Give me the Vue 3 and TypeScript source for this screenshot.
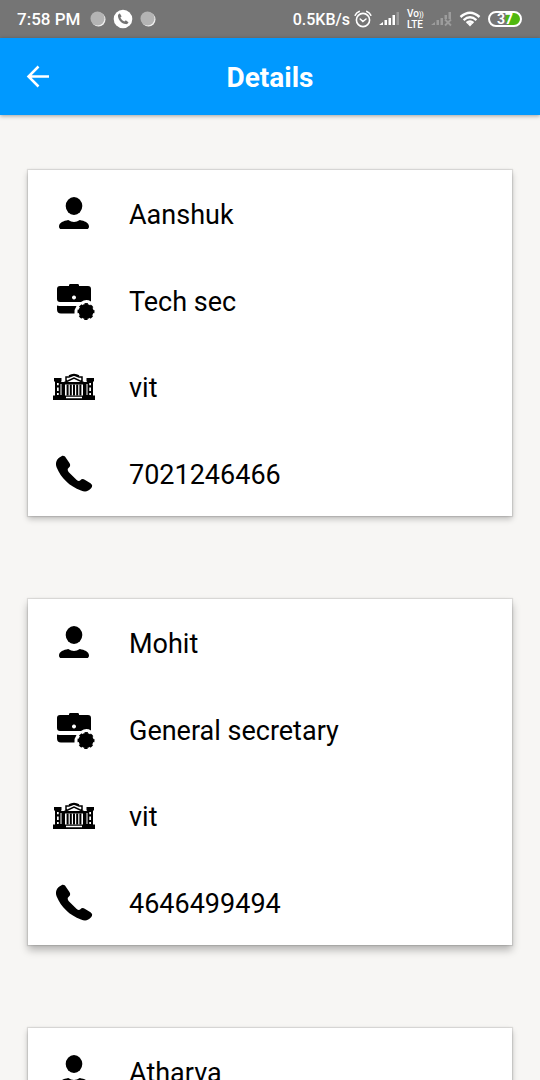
<script setup lang="ts">
interface Contact {
  name: string
  role: string
  college: string
  phone: string
}

const contacts: Contact[] = [
  { name: 'Aanshuk', role: 'Tech sec', college: 'vit', phone: '7021246466' },
  { name: 'Mohit', role: 'General secretary', college: 'vit', phone: '4646499494' },
  { name: 'Atharva', role: '', college: '', phone: '' },
]
</script>

<template>
  <div class="screen">
    <div class="status">
      <div class="status-left">
        <span class="clock">7:58 PM</span>
        <svg class="dot" viewBox="0 0 16 16" aria-hidden="true">
          <circle cx="8.5" cy="8.5" r="7" fill="#f0f0f0" />
          <circle cx="7.5" cy="7.5" r="7" fill="#b4b4b4" />
        </svg>
        <svg class="call" viewBox="0 0 20 20" aria-hidden="true">
          <circle cx="10" cy="10" r="9.3" fill="#fff" />
          <path d="M6.3 4.7c-1 .6-1.5 1.5-1.3 2.7.7 4 3.5 6.9 7.6 7.7 1.2.2 2.2-.3 2.7-1.3.2-.4.1-.7-.2-.9l-2-1.3c-.3-.2-.7-.2-.9.1l-.8.9C9.5 11.7 8.3 10.5 7.4 8.6l.9-.8c.3-.3.3-.6.1-.9L7.2 4.9c-.2-.3-.5-.4-.9-.2z" fill="#757575" />
        </svg>
        <svg class="dot" viewBox="0 0 16 16" aria-hidden="true">
          <circle cx="8.5" cy="8.5" r="7" fill="#f0f0f0" />
          <circle cx="7.5" cy="7.5" r="7" fill="#b4b4b4" />
        </svg>
      </div>
      <div class="status-right">
        <div class="network">
          <span class="speed">0.5KB/s</span>
          <svg class="alarm" viewBox="0 0 18 18" fill="none" stroke="#fff" stroke-width="1.6" stroke-linecap="round" aria-hidden="true">
            <circle cx="9" cy="10" r="6.6" />
            <path d="M6.2 9l2.7 2.5L12 9M1.2 5.2Q2.3 2.5 5.2 1.4M16.8 5.2Q15.7 2.5 12.8 1.4" />
          </svg>
        </div>
        <svg class="signal" viewBox="0 0 21 16" aria-hidden="true">
          <path d="M0 14l4-3v3zM5.5 9H8v5H5.5zM9.5 7H12v7H9.5zM13.5 4H16v10h-2.5z" fill="#fff" />
          <path d="M17.5 1H20v13h-2.5z" fill="#999" />
        </svg>
        <span class="volte"><span>Vo<small>))</small></span><span>LTE</span></span>
        <svg class="signal" viewBox="0 0 21 16" aria-hidden="true">
          <path d="M0 14l4-3v3zM5.5 9H8v5H5.5zM9.5 7H12v7H9.5zM13.5 4H16v4h-2.5zM17.5 1H20v7h-2.5z" fill="#9c9c9c" />
          <path d="M14 8.5l6 6M20 8.5l-6 6" stroke="#9c9c9c" stroke-width="1.8" />
        </svg>
        <svg class="wifi" viewBox="0 0 22 16" fill="none" stroke="#fff" stroke-width="2.4" aria-hidden="true">
          <path d="M1.5 6Q11-2.5 20.5 6M4.6 9.2Q11 3.5 17.4 9.2M7.6 12Q11 9 14.4 12" />
          <path d="M8.5 12.7L11 15.5l2.5-2.8Q11 11 8.5 12.7z" fill="#fff" stroke="none" />
        </svg>
        <span class="battery">37</span>
      </div>
    </div>

    <header class="bar">
      <button class="back" type="button" aria-label="Back">
        <svg viewBox="0 0 24 24" fill="none" stroke="#fff" stroke-width="2.5" aria-hidden="true">
          <path d="M12.5 1.500L2.500 11.500l10 10M2.500 11.500H23" />
        </svg>
      </button>
      <h1>Details</h1>
    </header>

    <main class="list">
      <article v-for="contact in contacts" :key="contact.name" class="card">
        <div class="row">
          <svg class="icon" viewBox="0 0 44 44" aria-hidden="true">
            <ellipse cx="22" cy="13" rx="8.3" ry="9" />
            <path d="M7 33.2C7.3 29.5 11.5 28 16.2 27Q22 31 27.800 27C32.500 28 36.700 29.500 37 33.200Q37 36 34.800 36H9.200Q7 36 7 33.200z" />
          </svg>
          <span>{{ contact.name }}</span>
        </div>
        <div class="row">
          <svg class="icon" viewBox="0 0 44 44" aria-hidden="true">
            <path fill-rule="evenodd" d="M8 6h9V5.300Q17 4 18.500 4h7Q27 4 27 5.300V6h9q3 0 3 3v12.500Q34 18.500 29 22H8q-3 0-3-3V9q0-3 3-3zM22 15.500a2 2 0 1 0 .01 0z" />
            <path d="M5 25.500Q7 26 10 26h14.500Q22 29.500 22.500 33.500H9q-4 0-4-4z" />
            <circle cx="34" cy="31.500" r="7.500" />
            <circle cx="34" cy="31.500" r="7.600" fill="none" stroke="#000" stroke-width="1.800" stroke-dasharray="3.400 2.570" stroke-dashoffset="1.700" />
          </svg>
          <span>{{ contact.role }}</span>
        </div>
        <div class="row">
          <svg class="icon" viewBox="0 0 44 44" aria-hidden="true">
            <path d="M1 29.500h42V34H1zM2 12h7.500v3.500H2zM34.500 12H42v3.500h-7.500z" />
            <path d="M3 15h6v15H3zM35 15h6v15h-6zM9 16h26v14H9z" />
            <path d="M5 17h1.700v2.200H5zM5 21.500h1.700V25H5zM5 27h1.700v2H5zM37.300 17H39v2.200h-1.700zM37.300 21.500H39V25h-1.700zM37.300 27H39v2h-1.700zM8.500 18h1v11h-1zM34.500 18h1v11h-1z" fill="#fff" />
            <path d="M13 18.500h18v11H13z" fill="#fff" />
            <path d="M14.600 18.500h2v11h-2zM17.800 18.500h2v11h-2zM21 18.500h2v11h-2zM24.200 18.500h2v11h-2zM27.400 18.500h2v11h-2z" />
            <path d="M17 16L22 13.500l5 2.500z" fill="#fff" />
            <path d="M12.500 16.500L22 12l9.500 4.500M14 15.500V11h3L22 9l5 2h3v4.500M17 10Q22 7 27 10" fill="none" stroke="#000" stroke-width="1.500" />
            <path d="M14 31.500h16" stroke="#fff" stroke-width="1.500" />
          </svg>
          <span>{{ contact.college }}</span>
        </div>
        <div class="row">
          <svg class="icon" viewBox="0 0 44 44" aria-hidden="true">
            <path d="M9.500 3.200C11.500 2.200 13 3.300 14 5L17.600 10.300C18.800 12.300 18 14 16.500 15.100C15.300 16.200 15.500 17.500 16.800 19.200L24.700 27C26 28.200 27.300 28.500 28.400 27.300C29.500 26 31 25.700 32.700 26.700L38.500 30.300C40.600 31.800 40.600 33.500 39.300 35C36.200 38.500 33.300 39.300 29 37.500C17.500 33.300 9 25 4.700 14.500C2.900 9.700 4.600 5.500 9.500 3.200z" />
          </svg>
          <span>{{ contact.phone }}</span>
        </div>
      </article>
    </main>
  </div>
</template>

<style>
body {
  margin: 0;
}
</style>

<style scoped>
.screen {
  display: flex;
  flex-direction: column;
  height: 100vh;
  overflow: hidden;
  background: #f7f6f4;
  font-family: Roboto, "Liberation Sans", sans-serif;
  color: #000;
}

.status {
  display: flex;
  flex: none;
  align-items: center;
  justify-content: space-between;
  height: 38px;
  padding: 0 18px 0 17px;
  box-sizing: border-box;
  background: #757575;
  color: #fff;
  font-size: 17px;
  font-weight: 500;
}

.status-left,
.status-right,
.network {
  display: flex;
  align-items: center;
}

.status-left,
.status-right {
  gap: 7px;
}

.network {
  gap: 4px;
}

.clock {
  margin-right: 3px;
}

.speed {
  font-size: 16px;
}

.dot {
  width: 16px;
  height: 16px;
}

.call {
  width: 20px;
  height: 20px;
}

.alarm {
  width: 18px;
  height: 18px;
}

.signal {
  width: 21px;
  height: 16px;
}

.volte {
  display: flex;
  flex-direction: column;
  width: 17px;
  font-size: 10px;
  line-height: 9px;
  font-weight: 500;
}

.volte small {
  font-size: 7px;
}

.wifi {
  width: 22px;
  height: 16px;
}

.battery {
  width: 34px;
  height: 16px;
  box-sizing: border-box;
  border: 2px solid #fff;
  border-radius: 8px;
  background: radial-gradient(circle at 23px 6px, #4fb80f 7px, #757575 8px);
  font-size: 14px;
  line-height: 13px;
  font-weight: 700;
  text-align: center;
}

.bar {
  display: grid;
  grid-template-columns: 76px 1fr 76px;
  flex: none;
  align-items: center;
  height: 77px;
  background: #0099ff;
  color: #fff;
  box-shadow: 0 1px 4px rgba(0, 0, 0, 0.35);
}

.back {
  display: flex;
  justify-content: center;
  align-items: center;
  height: 76px;
  padding: 0;
  border: 0;
  background: none;
}

.back svg {
  width: 24px;
  height: 24px;
}

h1 {
  margin: 0;
  padding-top: 2px;
  font-size: 28px;
  line-height: 32px;
  font-weight: 700;
  text-align: center;
}

.list {
  display: flex;
  flex-direction: column;
  gap: 83px;
  padding: 55px 28px 0;
}

.card {
  display: grid;
  flex: none;
  grid-auto-rows: 1fr;
  min-height: 346px;
  background: #fff;
  box-shadow: 0 0 1px 1px rgba(0, 0, 0, 0.1), 0 3px 6px rgba(0, 0, 0, 0.24);
}

.card:nth-child(2) {
  box-shadow: 0 0 1px 1px rgba(0, 0, 0, 0.1), 0 5px 8px rgba(0, 0, 0, 0.28);
}

.row {
  display: flex;
  align-items: center;
  gap: 33px;
  padding: 4px 24px 0;
  font-size: 27px;
  line-height: 32px;
}

.icon {
  flex: none;
  width: 44px;
  height: 44px;
}
</style>
